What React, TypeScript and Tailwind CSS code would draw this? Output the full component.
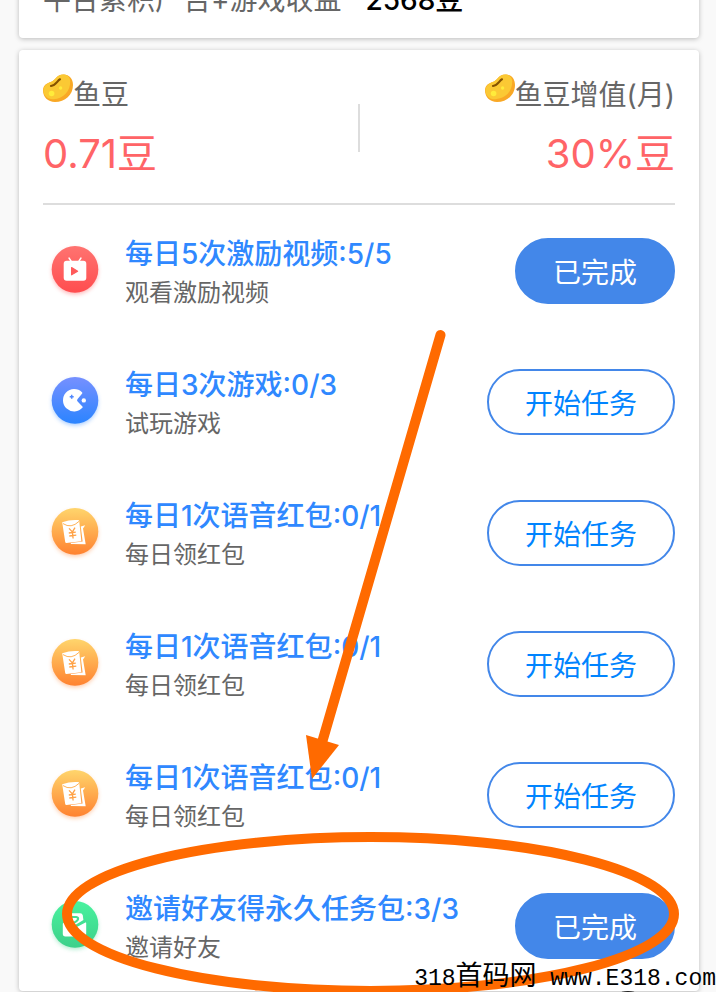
import type { ReactNode } from 'react';
import clsx from 'clsx';

type TaskKind = 'video' | 'game' | 'packet' | 'invite';

type Task = {
  id: number;
  kind: TaskKind;
  title: string;
  progress: string;
  desc: string;
  done: boolean;
};

const tasks: Task[] = [
  { id: 1, kind: 'video', title: '每日5次激励视频', progress: '5/5', desc: '观看激励视频', done: true },
  { id: 2, kind: 'game', title: '每日3次游戏', progress: '0/3', desc: '试玩游戏', done: false },
  { id: 3, kind: 'packet', title: '每日1次语音红包', progress: '0/1', desc: '每日领红包', done: false },
  { id: 4, kind: 'packet', title: '每日1次语音红包', progress: '0/1', desc: '每日领红包', done: false },
  { id: 5, kind: 'packet', title: '每日1次语音红包', progress: '0/1', desc: '每日领红包', done: false },
  { id: 6, kind: 'invite', title: '邀请好友得永久任务包', progress: '3/3', desc: '邀请好友', done: true },
];

// 图标渐变色：上 / 下
const iconColors: Record<TaskKind, [string, string]> = {
  video: ['#ff7370', '#ff4d4f'],
  game: ['#7690ff', '#2b84ff'],
  packet: ['#ffd56c', '#ff8230'],
  invite: ['#48f29e', '#3dd08a'],
};

const iconShapes: Record<TaskKind, ReactNode> = {
  video: (
    <>
      <path d="M20 14l-2-3M28 14l2-3" stroke="#fff" strokeWidth="1.4" strokeLinecap="round" />
      <rect x="12.7" y="13.7" width="22.6" height="20" rx="3" fill="#fff" />
      <path d="M20.6 20.6v7.2l6-3.6z" fill="#ff5a5b" stroke="#ff5a5b" strokeWidth="1.2" strokeLinejoin="round" />
    </>
  ),
  game: (
    <>
      <path
        d="M31 14.2A11.2 11.2 0 1 0 31.6 29.6Q32 29 31.4 28.5L26.6 23.6Q25.4 22.3 26.6 21L31 15.8Q31.8 14.9 31 14.2z"
        fill="#fff"
      />
      <path d="M20.7 16.8v4M18.7 18.8h4" stroke="#5088ff" strokeWidth="1.5" />
      <circle cx="32.8" cy="22.4" r="2.2" fill="#fff" />
    </>
  ),
  packet: (
    <>
      <path d="M29.8 17.6l4.4-1.4-2.2 3.4 2.7 15.6-14.8-.2-.1-.9 11.8-1.5z" fill="#fff" />
      <path d="M11.2 13.2Q19 10.4 27 11q1 0 1.2 1l2.2 20.2-15 1.9q-1 0-1.2-1z" fill="#fff" />
      <path d="M12 14.6q8.2 5.4 16-2.2" stroke="#ffb257" strokeWidth="1" fill="none" />
      <path
        d="M18 19.4l3.4 3.5 2.6-4.2M21.4 22.9l.7 6.6M17.8 24l7-.8M18.3 27l7-.8"
        stroke="#ffa247"
        strokeWidth="1.3"
        fill="none"
      />
    </>
  ),
  invite: (
    <>
      <path d="M15.4 20v-6.5q0-2.2 2.2-2.2h11.6q2.2 0 2.6 2.2l.6 4.6-8.6 5.2z" fill="#fff" />
      <path d="M13.8 20.8l10 4.4 10-5q1.4-.5 1.4 1v10.6q0 2.6-2.6 2.6H14.4q-2.6 0-2.6-2.6V22q0-1.8 2-1.2z" fill="#fff" />
      <path
        d="M20 15h5.2q2.6.4 1.6 2.8-1.2 2-4.4 3.2M24.4 24.6l10-5.4"
        stroke="#44e094"
        strokeWidth="2.2"
        fill="none"
        strokeLinecap="round"
      />
    </>
  ),
};

function TaskIcon({ kind, id }: { kind: TaskKind; id: number }) {
  const [top, bottom] = iconColors[kind];
  const fillId = `icon-fill-${id}`;
  const glowId = `icon-glow-${id}`;

  return (
    <svg width="48" height="48" viewBox="0 0 48 48" className="shrink-0 overflow-visible" aria-hidden="true">
      <defs>
        <linearGradient id={fillId} x1="0" y1="0" x2="0" y2="1">
          <stop offset="0" stopColor={top} />
          <stop offset="1" stopColor={bottom} />
        </linearGradient>
        <filter id={glowId} x="-30%" y="-30%" width="160%" height="160%">
          <feGaussianBlur stdDeviation="2" />
        </filter>
      </defs>
      <circle cx="24" cy="24.4" r="23" fill={bottom} opacity="0.4" filter={`url(#${glowId})`} />
      <circle cx="24" cy="22.4" r="23.3" fill={`url(#${fillId})`} />
      {iconShapes[kind]}
    </svg>
  );
}

function BeanIcon() {
  return (
    <svg width="30" height="30" viewBox="0 0 30 30" className="shrink-0" aria-hidden="true">
      <path
        d="M0 17.5C0 12 4 10 8.400 8.700 12.400 7.500 13 1.500 20.400 1.500 26.400 1.500 30 6 30 12 30 22 22 29 12 29 4.800 29 0 24 0 17.500z"
        fill="#f9a825"
      />
      <path
        d="M.4 17C.8 12.500 4.400 10 8.400 8.700 12.400 7.500 13.400 1.500 20.400 1.500 24.400 1.500 27 4 27.200 8 27.400 18 21 25.600 10.400 26.200 4.400 26.400 .2 22.500 .4 17z"
        fill="#fbc934"
      />
      <path d="M8 13C13 12.500 14.200 7.700 17 6.300" stroke="#855200" strokeWidth="2.200" strokeLinecap="round" fill="none" />
      <circle cx="8.600" cy="20.500" r="2.800" fill="#ffeb3b" />
      <circle cx="17.600" cy="15" r="1.700" fill="#ffeb3b" />
    </svg>
  );
}

function Balance({ label, value, alignEnd }: { label: string; value: string; alignEnd?: boolean }) {
  return (
    <div className={clsx('flex flex-1 flex-col', alignEnd && 'items-end')}>
      <div className="flex items-start">
        <BeanIcon />
        <span className="text-[28px] leading-[44px] text-[#666]">{label}</span>
      </div>
      <div className="mt-1 text-[40px] leading-[66px] text-[#ff6467]">{value}</div>
    </div>
  );
}

function TaskRow({ task }: { task: Task }) {
  return (
    <li className="flex h-[131px] items-center pl-2">
      <TaskIcon kind={task.kind} id={task.id} />
      <div className="ml-[26px] flex-1 pt-1">
        <h3 className="text-[28px] leading-10 font-medium text-[#2f88ff]">
          {task.title}:{task.progress}
        </h3>
        <p className="text-[24px] leading-[38px] text-[#666]">{task.desc}</p>
      </div>
      <button
        type="button"
        className={clsx(
          'h-[66px] shrink-0 rounded-full border-2 border-[#4387e9] px-9 pt-1 text-[28px]',
          task.done ? 'bg-[#4387e9] text-white' : 'bg-white text-[#0084ff]',
        )}
      >
        {task.done ? '已完成' : '开始任务'}
      </button>
    </li>
  );
}

// 手绘标注：箭头 + 圈
function Annotation() {
  return (
    <svg width="716" height="992" viewBox="0 0 716 992" className="pointer-events-none absolute top-0 left-0" aria-hidden="true">
      <path d="M440.500 335L321 746" stroke="#ff6a00" strokeWidth="10" strokeLinecap="round" />
      <path d="M306 735L339 745L312 779z" fill="#ff6a00" />
      <ellipse cx="370.500" cy="914" rx="303.500" ry="77" stroke="#ff6a00" strokeWidth="10" fill="none" />
      <path d="M622 992.500q6-1.600 12 0" stroke="#222" strokeWidth="1.500" fill="none" />
    </svg>
  );
}

export default function App() {
  return (
    <main className="relative min-h-screen overflow-hidden bg-[#f9f9f9] pr-[17px] pl-[19px] font-[Inter,'Noto_Sans_CJK_SC',sans-serif]">
      <section className="-mt-5 flex gap-6 rounded-[4px] bg-white px-6 pb-[18px] text-[28px] leading-10 shadow-[0_1px_5px_rgba(0,0,0,0.25)]">
        <span className="text-[#666]">平台累积广告+游戏收益</span>
        <span className="font-medium text-black">2568豆</span>
      </section>

      <section className="mt-3 rounded-[4px] bg-white px-6 shadow-[0_1px_5px_rgba(0,0,0,0.25)]">
        <div className="flex items-start border-b-2 border-[#ddd] pt-[23px] pb-4">
          <Balance label="鱼豆" value="0.71豆" />
          <div className="mt-[31px] h-12 w-[2px] bg-[#ddd]" />
          <Balance label="鱼豆增值(月)" value="30%豆" alignEnd />
        </div>
        <ul>
          {tasks.map((task) => (
            <TaskRow key={task.id} task={task} />
          ))}
        </ul>
      </section>

      <Annotation />

      <p className="absolute top-[964px] right-0 flex items-baseline font-['Liberation_Mono','Noto_Sans_CJK_SC',monospace] text-[23px] leading-7 whitespace-pre text-black">
        318<span className="text-[27px] leading-7">首码网</span> www.E318.com
      </p>
    </main>
  );
}
